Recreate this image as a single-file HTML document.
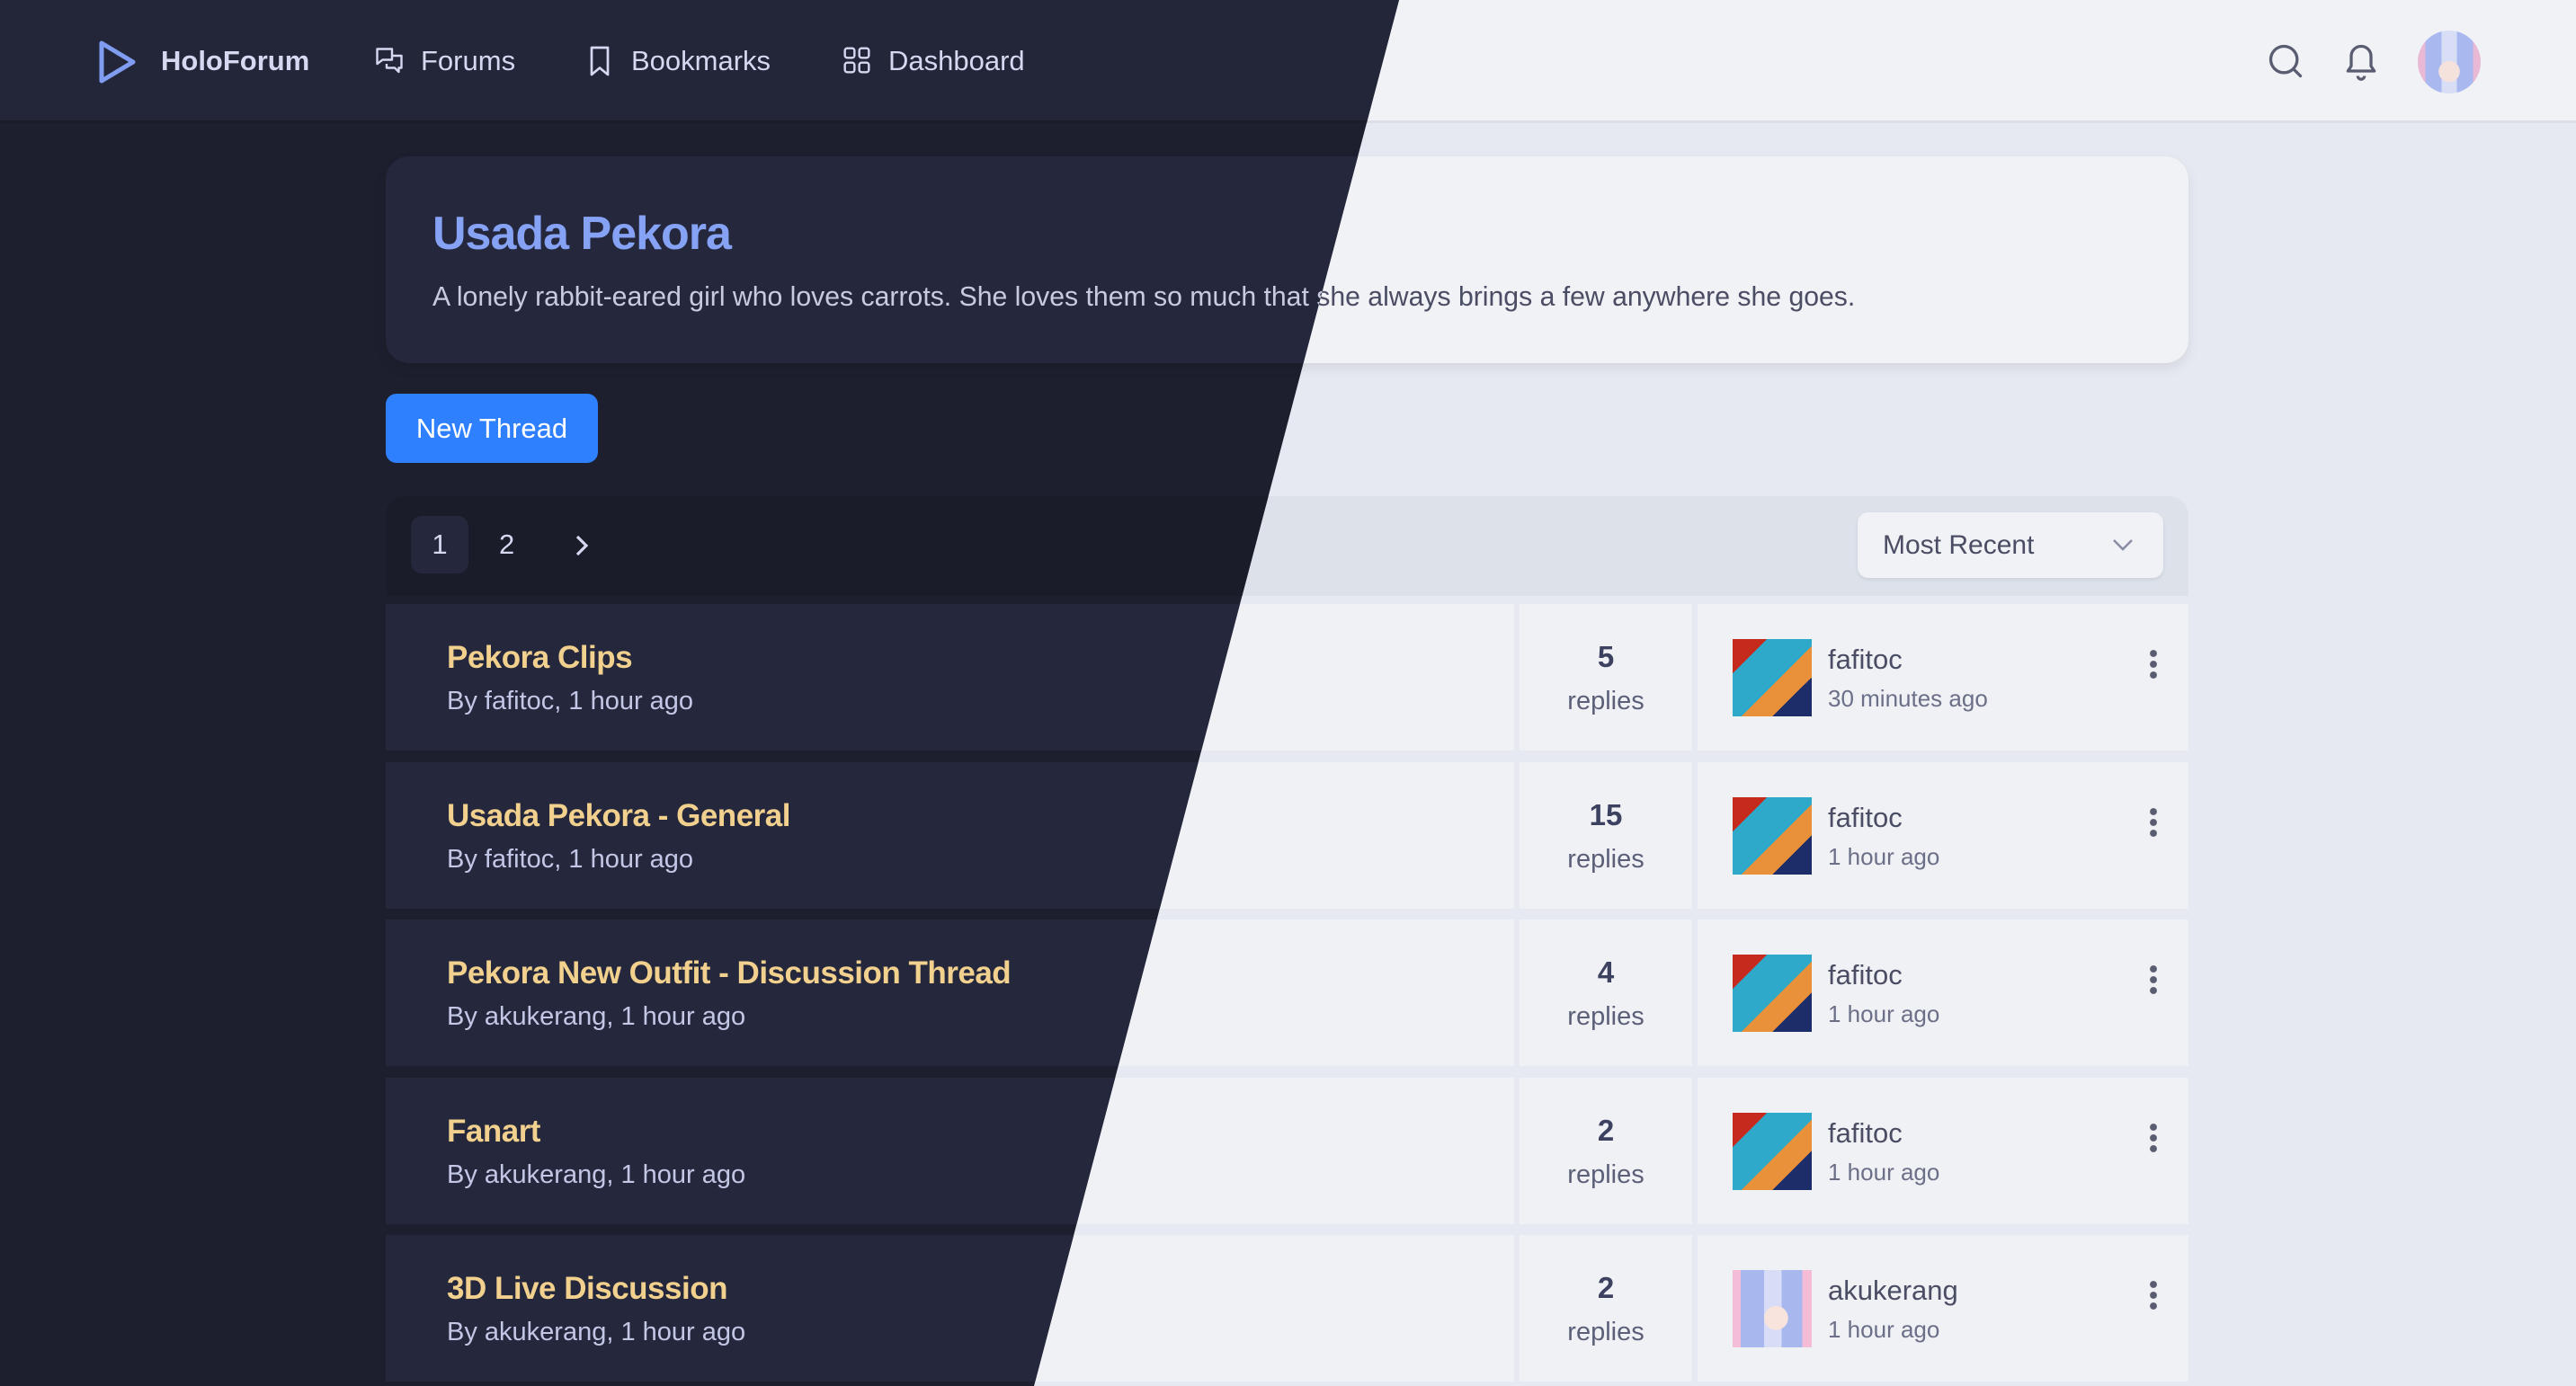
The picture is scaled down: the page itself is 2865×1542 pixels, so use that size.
<!DOCTYPE html>
<html><head><meta charset="utf-8">
<style>
*{margin:0;padding:0;box-sizing:border-box}
html,body{width:2865px;height:1542px;overflow:hidden;font-family:"Liberation Sans",sans-serif}
.pg{position:absolute;left:0;top:0;width:2865px;height:1542px;background:var(--bg)}
.light{--bg:#e6e9f1;--nav:#f1f2f6;--navb:#dcdfe8;--card:#f1f2f6;--lh:#dde1ea;--row:#f0f1f5;--t1:#7f9cf0;--desc:#4a4d63;--navt:#4a4d63;--title:#e9c98a;--sub:#5b5f78;--num:#3d4160;--muted:#6b6f88;--pgb:#e6e9f1;--dd:#f1f2f6;--ic:#5a5d72}
.dark{--bg:#1d1f2e;--nav:#232639;--navb:#1a1c29;--card:#25283d;--lh:#1a1c29;--row:#25283c;--t1:#86a2f5;--desc:#c8cbe0;--navt:#d4d8f0;--title:#f2d08e;--sub:#c3c7e6;--num:#d4d8f0;--muted:#a3a7c0;--pgb:#25283c;--dd:#25283c;--ic:#d4d8f0;clip-path:polygon(0 0,1556px 0,1150px 1542px,0 1542px)}
.nav{position:absolute;left:0;top:0;width:2865px;height:137px;background:var(--nav);border-bottom:3px solid var(--navb)}
.ni{position:absolute;top:48px;font-size:31px;color:var(--navt);line-height:40px}
.card{position:absolute;left:429px;top:174px;width:2005px;height:230px;background:var(--card);border-radius:26px;box-shadow:0 6px 14px rgba(0,0,0,.08)}
.card h1{position:absolute;left:52px;top:56px;font-size:52px;font-weight:bold;color:var(--t1);letter-spacing:-1px}
.card p{position:absolute;left:52px;top:140px;font-size:30.2px;color:var(--desc);white-space:nowrap}
.btn{position:absolute;left:429px;top:438px;width:236px;height:77px;background:#2f80ff;border-radius:12px;color:#fff;font-size:31px;text-align:center;line-height:77px}
.lh{position:absolute;left:429px;top:552px;width:2005px;height:111px;background:var(--lh);border-radius:22px 22px 0 0}
.p1{position:absolute;left:28px;top:22px;width:64px;height:64px;border-radius:12px;background:var(--pgb);color:var(--navt);font-size:31px;text-align:center;line-height:64px}
.p2{position:absolute;left:126px;top:22px;font-size:31px;color:var(--navt);line-height:64px}
.dd{position:absolute;left:1637px;top:18px;width:340px;height:73px;background:var(--dd);border-radius:12px;box-shadow:0 2px 4px rgba(0,0,0,.08);font-size:30px;color:var(--desc);line-height:73px;padding-left:28px}
.row{position:absolute;left:429px;width:2005px;height:163px}
.c1{position:absolute;left:0;top:0;width:1255px;height:163px;background:var(--row)}
.c2{position:absolute;left:1261px;top:0;width:192px;height:163px;background:var(--row);text-align:center}
.c3{position:absolute;left:1459px;top:0;width:546px;height:163px;background:var(--row)}
.tt{position:absolute;left:68px;top:40px;font-size:35px;font-weight:bold;color:var(--title);white-space:nowrap;letter-spacing:-.5px}
.st{position:absolute;left:68px;top:92px;font-size:29px;color:var(--sub);white-space:nowrap}
.n{position:absolute;left:0;width:100%;top:40px;font-size:33px;font-weight:bold;color:var(--num)}
.r{position:absolute;left:0;width:100%;top:92px;font-size:29px;color:var(--sub)}
.av{position:absolute;left:39px;top:39px;width:88px;height:86px;background:linear-gradient(135deg,#c62a1c 0 22%,#2fa9c9 22% 55%,#e8903a 55% 75%,#1d2d6a 75%)}
.av.g{background:radial-gradient(circle at 55% 62%,#f8e4dc 0 18%,transparent 19%),linear-gradient(90deg,#f4bcd6 0 10%,#a8b8ee 10% 40%,#d8dcf6 40% 62%,#a8b8ee 62% 88%,#f4bcd6 88%)}
.nm{position:absolute;left:145px;top:44px;font-size:31px;color:var(--desc)}
.tm{position:absolute;left:145px;top:90px;font-size:26px;color:var(--muted)}
.kb{position:absolute;left:503px;top:49px;width:8px;height:36px;background:radial-gradient(circle,var(--ic) 3.6px,transparent 4.2px) 0 0/8px 12px repeat-y}
</style></head><body>

<div class="pg light">
<div class="nav">
 <div class="ni" style="left:179px;font-weight:bold">HoloForum</div>
 <div class="ni" style="left:468px">Forums</div>
 <div class="ni" style="left:702px">Bookmarks</div>
 <div class="ni" style="left:988px">Dashboard</div>
 <svg style="position:absolute;left:2520px;top:46px" width="44" height="44" viewBox="0 0 24 24" fill="none" stroke="#5a5d72" stroke-width="1.8"><circle cx="11" cy="11" r="8"/><path d="M17 17l4 4" stroke-linecap="round"/></svg>
 <svg style="position:absolute;left:2604px;top:44px" width="44" height="48" viewBox="0 0 24 26" fill="none" stroke="#5a5d72" stroke-width="1.8" stroke-linejoin="round"><path d="M6 10a6 6 0 0 1 12 0v6l2 3H4l2-3z"/><path d="M10 22a2 2 0 0 0 4 0"/></svg>
 <div style="position:absolute;left:2689px;top:34px;width:70px;height:70px;border-radius:50%;background:radial-gradient(circle at 50% 65%,#f6e2dc 0 20%,transparent 21%),linear-gradient(90deg,#e8b8d4 0 12%,#a9b9ef 12% 38%,#d9def7 38% 62%,#a9b9ef 62% 88%,#e8b8d4 88%)"></div>
</div>
<div class="card"><h1>Usada Pekora</h1><p>A lonely rabbit-eared girl who loves carrots. She loves them so much that she always brings a few anywhere she goes.</p></div>
<div class="btn">New Thread</div>
<div class="lh"><div class="p1">1</div><div class="p2">2</div>
 <div class="dd">Most Recent<svg style="position:absolute;left:283px;top:29px" width="24" height="16" viewBox="0 0 12 8" fill="none" stroke="#8a8ea5" stroke-width="1.3"><path d="M1 1l5 5 5-5"/></svg></div>
</div>
<div class="row" style="top:672px"><div class="c1"><div class="tt">Pekora Clips</div><div class="st">By fafitoc, 1 hour ago</div></div><div class="c2"><div class="n">5</div><div class="r">replies</div></div><div class="c3"><div class="av"></div><div class="nm">fafitoc</div><div class="tm">30 minutes ago</div><div class="kb"></div></div></div>
<div class="row" style="top:848px"><div class="c1"><div class="tt">Usada Pekora - General</div><div class="st">By fafitoc, 1 hour ago</div></div><div class="c2"><div class="n">15</div><div class="r">replies</div></div><div class="c3"><div class="av"></div><div class="nm">fafitoc</div><div class="tm">1 hour ago</div><div class="kb"></div></div></div>
<div class="row" style="top:1023px"><div class="c1"><div class="tt">Pekora New Outfit - Discussion Thread</div><div class="st">By akukerang, 1 hour ago</div></div><div class="c2"><div class="n">4</div><div class="r">replies</div></div><div class="c3"><div class="av"></div><div class="nm">fafitoc</div><div class="tm">1 hour ago</div><div class="kb"></div></div></div>
<div class="row" style="top:1199px"><div class="c1"><div class="tt">Fanart</div><div class="st">By akukerang, 1 hour ago</div></div><div class="c2"><div class="n">2</div><div class="r">replies</div></div><div class="c3"><div class="av"></div><div class="nm">fafitoc</div><div class="tm">1 hour ago</div><div class="kb"></div></div></div>
<div class="row" style="top:1374px"><div class="c1"><div class="tt">3D Live Discussion</div><div class="st">By akukerang, 1 hour ago</div></div><div class="c2"><div class="n">2</div><div class="r">replies</div></div><div class="c3"><div class="av g"></div><div class="nm">akukerang</div><div class="tm">1 hour ago</div><div class="kb"></div></div></div>
</div>

<div class="pg dark">
<div class="nav">
 <svg style="position:absolute;left:108px;top:44px" width="46" height="50" viewBox="0 0 46 50"><path d="M5 4 L40 25 L5 46 Z" fill="none" stroke="#7f9cf0" stroke-width="5" stroke-linejoin="round"/></svg>
 <div class="ni" style="left:179px;font-weight:bold">HoloForum</div>
 <svg style="position:absolute;left:415px;top:50px" width="36" height="36" viewBox="0 0 24 24" fill="none" stroke="#d4d8f0" stroke-width="1.6" stroke-linejoin="round"><path d="M3 3h11v8H7l-4 3z"/><path d="M14 8h7v9h-2v3l-3-3h-6v-3"/></svg>
 <div class="ni" style="left:468px">Forums</div>
 <svg style="position:absolute;left:652px;top:50px" width="30" height="36" viewBox="0 0 20 24" fill="none" stroke="#d4d8f0" stroke-width="1.8"><path d="M4 2h12v20l-6-5-6 5z" stroke-linejoin="round"/></svg>
 <div class="ni" style="left:702px">Bookmarks</div>
 <svg style="position:absolute;left:937px;top:51px" width="32" height="32" viewBox="0 0 24 24" fill="none" stroke="#d4d8f0" stroke-width="1.8"><rect x="2" y="2" width="8" height="8" rx="2"/><rect x="14" y="2" width="8" height="8" rx="2"/><rect x="2" y="14" width="8" height="8" rx="2"/><rect x="14" y="14" width="8" height="8" rx="2"/></svg>
 <div class="ni" style="left:988px">Dashboard</div>
</div>
<div class="card"><h1>Usada Pekora</h1><p>A lonely rabbit-eared girl who loves carrots. She loves them so much that she always brings a few anywhere she goes.</p></div>
<div class="btn">New Thread</div>
<div class="lh"><div class="p1">1</div><div class="p2">2</div>
 <svg style="position:absolute;left:207px;top:41px" width="20" height="28" viewBox="0 0 10 14" fill="none" stroke="#d4d8f0" stroke-width="1.6"><path d="M3 2l5 5-5 5"/></svg>
</div>
<div class="row" style="top:672px"><div class="c1"><div class="tt">Pekora Clips</div><div class="st">By fafitoc, 1 hour ago</div></div></div>
<div class="row" style="top:848px"><div class="c1"><div class="tt">Usada Pekora - General</div><div class="st">By fafitoc, 1 hour ago</div></div></div>
<div class="row" style="top:1023px"><div class="c1"><div class="tt">Pekora New Outfit - Discussion Thread</div><div class="st">By akukerang, 1 hour ago</div></div></div>
<div class="row" style="top:1199px"><div class="c1"><div class="tt">Fanart</div><div class="st">By akukerang, 1 hour ago</div></div></div>
<div class="row" style="top:1374px"><div class="c1"><div class="tt">3D Live Discussion</div><div class="st">By akukerang, 1 hour ago</div></div></div>
</div>

</body></html>
